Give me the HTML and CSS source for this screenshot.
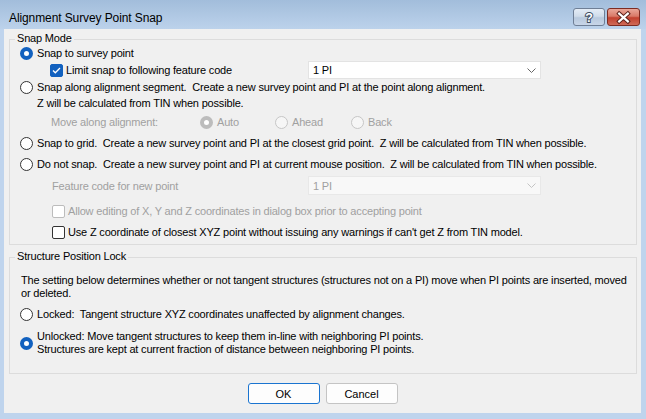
FILE: index.html
```html
<!DOCTYPE html>
<html lang="en">
<head>
    <meta charset="UTF-8">
    <title>Alignment Survey Point Snap</title>
    <link rel="stylesheet" href="styles.css">
</head>
<body>
    <div class="window">
        <div class="titlebar">
            <span class="title">Alignment Survey Point Snap</span>
            <div class="caption-buttons">
                <button class="cap cap-help">
                    <svg width="31" height="17" viewBox="0 0 31 17">
                        <text x="15.5" y="13" text-anchor="middle" font-family="Liberation Sans, Arial, sans-serif" font-weight="bold" font-size="13" fill="#fff" stroke="#3e4d62" stroke-width="2" paint-order="stroke">?</text>
                    </svg>
                </button>
                <button class="cap cap-close">
                    <svg width="32" height="17" viewBox="0 0 32 17">
                        <path d="M11.5 4.5 L20.5 12.5 M20.5 4.5 L11.5 12.5" stroke="#5a1f18" stroke-width="4.2" stroke-linecap="square"/>
                        <path d="M11.5 4.5 L20.5 12.5 M20.5 4.5 L11.5 12.5" stroke="#fff" stroke-width="2.2" stroke-linecap="square"/>
                    </svg>
                </button>
            </div>
        </div>

        <div class="client">
            <div class="group group-snap">
                <span class="group-title">Snap Mode</span>

                <div class="row r1"><span class="radio checked"></span>Snap to survey point</div>

                <div class="row r2">
                    <div class="opt sub-limit">
                        <span class="check checked">
                            <svg width="11" height="11" viewBox="0 0 11 11"><polyline points="2,5.5 4.3,7.8 9,3" fill="none" stroke="#fff" stroke-width="1.3"/></svg>
                        </span>Limit snap to following feature code
                    </div>
                    <div class="combo">1 PI
                        <svg class="chev" width="9" height="5" viewBox="0 0 9 5"><polyline points="0.5,0.5 4.5,4.5 8.5,0.5" fill="none" stroke="#666" stroke-width="1"/></svg>
                    </div>
                </div>

                <div class="row r3">
                    <span class="radio"></span>
                    <span class="multi">Snap along alignment segment.&nbsp; Create a new survey point and PI at the point along alignment.<br>Z will be calculated from TIN when possible.</span>
                </div>

                <div class="row r5 disabled">
                    <span class="move-label">Move along alignment:</span>
                    <span class="move-opt opt-auto"><span class="radio checked off"></span>Auto</span>
                    <span class="move-opt opt-ahead"><span class="radio off"></span>Ahead</span>
                    <span class="move-opt"><span class="radio off"></span>Back</span>
                </div>

                <div class="row r6"><span class="radio"></span>Snap to grid.&nbsp; Create a new survey point and PI at the closest grid point.&nbsp; Z will be calculated from TIN when possible.</div>

                <div class="row r7"><span class="radio"></span>Do not snap.&nbsp; Create a new survey point and PI at current mouse position.&nbsp; Z will be calculated from TIN when possible.</div>

                <div class="row r8">
                    <div class="opt sub-feature disabled">Feature code for new point</div>
                    <div class="combo off">1 PI
                        <svg class="chev" width="9" height="5" viewBox="0 0 9 5"><polyline points="0.5,0.5 4.5,4.5 8.5,0.5" fill="none" stroke="#c4c4c4" stroke-width="1"/></svg>
                    </div>
                </div>

                <div class="row r9 sub disabled"><span class="check off"></span>Allow editing of X, Y and Z coordinates in dialog box prior to accepting point</div>

                <div class="row r10 sub"><span class="check"></span>Use Z coordinate of closest XYZ point without issuing any warnings if can't get Z from TIN model.</div>
            </div>

            <div class="group group-lock">
                <span class="group-title">Structure Position Lock</span>

                <p class="note">The setting below determines whether or not tangent structures (structures not on a PI) move when PI points are inserted, moved<br>or deleted.</p>

                <div class="row l1"><span class="radio"></span>Locked:&nbsp; Tangent structure XYZ coordinates unaffected by alignment changes.</div>

                <div class="row l2">
                    <span class="radio checked"></span>
                    <span class="multi tight">Unlocked: Move tangent structures to keep them in-line with neighboring PI points.<br>Structures are kept at current fraction of distance between neighboring PI points.</span>
                </div>
            </div>

            <div class="buttons">
                <button class="btn btn-default">OK</button>
                <button class="btn">Cancel</button>
            </div>
        </div>
    </div>
</body>
</html>
```

FILE: styles.css
```css
body {
    margin: 0;
    background: #bfd4ed;
    font-family: "Liberation Sans", Arial, sans-serif;
    font-size: 11px;
    letter-spacing: -0.18px;
    color: #000;
}
.window {
    width: 646px;
    height: 419px;
    display: flex;
    flex-direction: column;
}
.titlebar {
    height: 29px;
    box-sizing: border-box;
    display: flex;
    align-items: flex-start;
    padding: 0 6px 0 9px;
    background: linear-gradient(#a2bddb, #bcd2eb);
}
.title {
    font-size: 12px;
    line-height: 14px;
    letter-spacing: -0.1px;
    margin-top: 11px;
    color: #000;
}
.caption-buttons {
    margin-left: auto;
    margin-top: 8px;
    display: flex;
    gap: 2px;
}
.cap {
    padding: 0;
    height: 18px;
    border-radius: 3px;
    box-sizing: border-box;
    display: flex;
    align-items: center;
    justify-content: center;
}
.cap svg {
    display: block;
}
.cap-help {
    width: 32px;
    border: 1px solid #6f7f96;
    background: linear-gradient(#e4ecf6 0%, #d0dcea 45%, #b8c9de 55%, #c8d6e8 100%);
}
.cap-close {
    width: 33px;
    border: 1px solid #7d2c22;
    background: linear-gradient(#e9a799 0%, #d97a68 45%, #c2412f 55%, #cf6a57 100%);
}

.client {
    flex: 1;
    background: #f0f0f0;
    margin: 0 5px 6px 4px;
    display: flex;
    flex-direction: column;
}
.group {
    position: relative;
    border: 1px solid #dcdcdc;
    margin: 10px 4px 0 5px;
}
.group-title {
    position: absolute;
    top: -9px;
    left: 5px;
    padding: 0 2px;
    line-height: 14px;
    background: #f0f0f0;
}
.group-snap {
    padding: 5px 0 4px 0;
}
.group-lock {
    margin-top: 12px;
    padding: 16px 0 17px 0;
}

.row {
    display: flex;
    align-items: center;
    height: 16px;
    padding-left: 10px;
    white-space: nowrap;
}
.disabled {
    color: #a0a0a0;
}
.r2 {
    height: 18px;
    display: grid;
    grid-template-columns: 288px 233px;
}
.r3 {
    height: auto;
    align-items: flex-start;
}
.r3 .radio {
    margin-top: 2px;
}
.multi {
    line-height: 16px;
}
.multi.tight {
    line-height: 13px;
}
.r5 {
    margin-top: 3px;
}
.r6, .r7 {
    margin-top: 5px;
}
.r8 {
    margin-top: 4px;
    height: 19px;
    display: grid;
    grid-template-columns: 288px 233px;
}
.r9 {
    margin-top: 8px;
}
.r10 {
    margin-top: 5px;
}
.sub {
    padding-left: 42px;
}

.opt {
    display: flex;
    align-items: center;
}
.sub-limit {
    padding-left: 30px;
}
.sub-feature {
    padding-left: 32px;
}

.move-label {
    width: 149px;
    padding-left: 31px;
    flex: none;
}
.move-opt {
    display: flex;
    align-items: center;
}
.opt-auto {
    width: 75px;
}
.opt-ahead {
    width: 76px;
}

.radio {
    width: 13px;
    height: 13px;
    box-sizing: border-box;
    border: 1px solid #333;
    border-radius: 50%;
    background: #fff;
    margin-right: 4px;
    flex: none;
}
.radio.checked {
    border: 4px solid #1261bf;
}
.radio.off {
    border-color: #c6c6c6;
    background: #f6f6f6;
}
.radio.checked.off {
    border: 4px solid #bcbcbc;
    background: #fff;
}

.check {
    width: 13px;
    height: 13px;
    box-sizing: border-box;
    border: 1px solid #333;
    border-radius: 2px;
    background: #fff;
    margin-right: 3px;
    flex: none;
}
.check svg {
    display: block;
}
.check.checked {
    background: #1261bf;
    border-color: #1261bf;
}
.check.off {
    border-color: #bcbcbc;
}

.combo {
    height: 18px;
    box-sizing: border-box;
    background: #fff;
    border: 1px solid #e3e3e3;
    display: flex;
    align-items: center;
    padding: 0 4px 0 4px;
}
.combo.off {
    height: 19px;
    background: #f8f8f8;
    border-color: #e8e8e8;
    color: #a0a0a0;
}
.chev {
    margin-left: auto;
    display: block;
}

.note {
    margin: 0 0 0 11px;
    line-height: 13px;
    white-space: nowrap;
}
.l1 {
    margin-top: 6px;
}
.l2 {
    margin-top: 8px;
    height: 26px;
}

.buttons {
    display: flex;
    justify-content: center;
    gap: 6px;
    margin-top: 9px;
}
.btn {
    width: 72px;
    height: 21px;
    padding: 0;
    box-sizing: border-box;
    font-family: "Liberation Sans", Arial, sans-serif;
    font-size: 11px;
    color: #000;
    background: #fdfdfd;
    border: 1px solid #c4c4c4;
    border-radius: 3px;
}
.btn-default {
    border-color: #1a74d0;
}
```
